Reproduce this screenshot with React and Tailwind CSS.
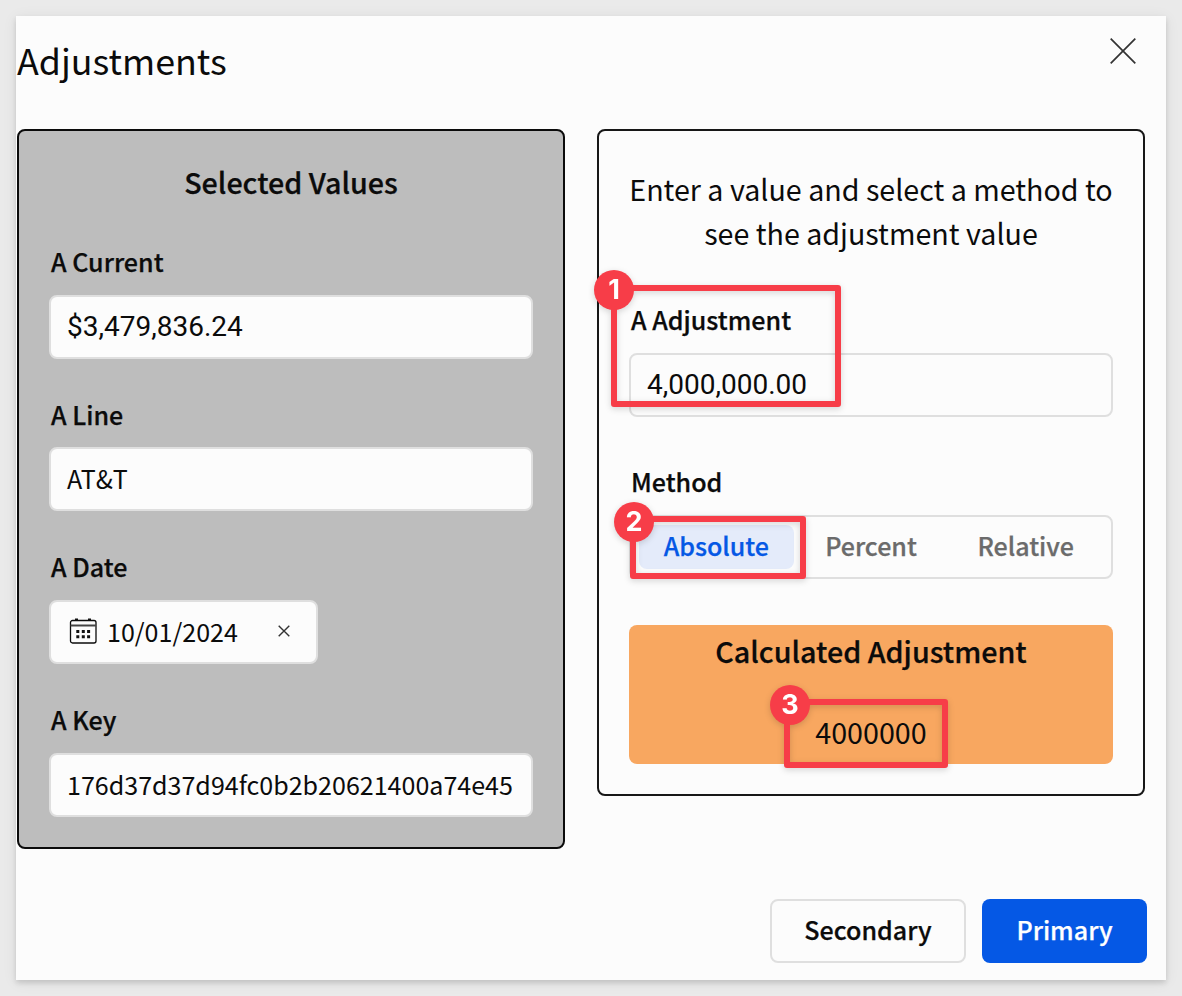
import React from "react";

const Label = ({ children, className = "" }) => (
  <div className={`h-[38px] pl-[2px] text-[25.05px] leading-[38px] font-medium [-webkit-text-stroke:0.25px_currentColor] ${className}`}>{children}</div>
);

const Field = ({ children, className = "" }) => (
  <div className={`flex h-16 items-center rounded-lg border-2 border-[#dfdfdf] bg-[#fcfcfc] px-4 leading-[38px] whitespace-nowrap ${className}`}>
    {children}
  </div>
);

const Cross = ({ size, stroke }) => (
  <svg width={size} height={size} viewBox={`0 0 ${size} ${size}`} fill="none" stroke="#333" strokeWidth={stroke}>
    <path d={`M.7 .7L${size - 0.7} ${size - 0.7}M${size - 0.7} .7L.7 ${size - 0.7}`} />
  </svg>
);

const Calendar = () => (
  <svg width="28" height="26" viewBox="0 0 28 26" fill="none">
    <rect x="1.5" y="2.5" width="25.5" height="22.5" rx="2" stroke="#0b0b0b" strokeWidth="1.3" />
    <path d="M1.5 7.5H27" stroke="#444" strokeWidth="2" />
    <path d="M6 1.3H9M19 1.3H22" stroke="#111" strokeWidth="1.8" />
    <path d="M7.3 13.5h3M12.8 13.5h3M18.1 13.5h3M7.3 18.7h3M12.8 18.7h3M18.1 18.7h3" stroke="#111" strokeWidth="3" />
  </svg>
);

const Callout = ({ n, className, badge }) => (
  <div className={`absolute rounded-[3px] border-6 border-[#f73d48] drop-shadow-[0_2px_3px_rgba(0,0,0,0.16)] ${className}`}>
    <div className={`absolute flex size-10 items-center justify-center rounded-full bg-[#f73d48] pb-px font-[Inter] text-[27px] leading-none font-bold text-white ${badge}`}>
      {n}
    </div>
  </div>
);

export default function App() {
  return (
    <div className="h-[996px] w-[1182px] overflow-hidden bg-[#eaeaea] p-4 font-['Noto_Sans_CJK_JP',sans-serif] text-[#0b0b0b]">
      <main className="flex h-[964px] w-[1150px] flex-col bg-[#fcfcfc] shadow-[0_3px_5px_rgba(0,0,0,0.13),0_2px_14px_rgba(0,0,0,0.07)]">
        <header className="flex h-[113px] justify-between pr-[30px] pl-px">
          <h1 className="pt-[15px] text-[35.8px] leading-[56px]">Adjustments</h1>
          <button className="mt-[22px] h-[26px]"><Cross size={26} stroke={1.7} /></button>
        </header>
        <div className="flex items-start gap-8 pl-px">
          <section className="h-[720px] w-[548px] rounded-lg border-2 border-[#0b0b0b] bg-[#bdbdbd] px-[30px]">
            <h2 className="mt-[29px] text-center text-[28.7px] leading-[44px] font-medium [-webkit-text-stroke:0.25px_currentColor]">Selected Values</h2>
            <Label className="mt-[38px]">A Current</Label>
            <Field className="mt-[15px] font-[Roboto] text-[28px]">$3,479,836.24</Field>
            <Label className="mt-[36px]">A Line</Label>
            <Field className="mt-[14px] pb-[2px] text-[25.05px]">AT&amp;T</Field>
            <Label className="mt-[36px]">A Date</Label>
            <Field className="mt-[15px] w-[269px] gap-[10px] pb-[2px] pl-[18px] text-[25.05px]">
              <Calendar />
              <span>10/01/2024</span>
              <span className="ml-auto pr-[10px]"><Cross size={12} stroke={1.4} /></span>
            </Field>
            <Label className="mt-[36px]">A Key</Label>
            <Field className="mt-[15px] pb-[2px] text-[25.05px]">176d37d37d94fc0b2b20621400a74e45</Field>
          </section>
          <section className="relative h-[667px] w-[548px] rounded-lg border-2 border-[#171717] px-[30px]">
            <p className="mt-[36px] text-center text-[28.65px] leading-[44px] whitespace-nowrap">Enter a value and select a method to<br />see the adjustment value</p>
            <Label className="mt-[45px]">A Adjustment</Label>
            <Field className="mt-[15px] font-[Roboto] text-[28px]">4,000,000.00</Field>
            <Label className="mt-[45px]">Method</Label>
            <div className="mt-[15px] flex h-16 items-center rounded-lg border-2 border-[#dfdfdf] px-2 text-[25.05px] leading-[41px] font-medium text-[#6b6b6b] [-webkit-text-stroke:0.25px_currentColor]">
              <span className="h-11 w-[155px] rounded-lg bg-[#e4ebfa] text-center text-[#0558e5]">Absolute</span>
              <span className="h-11 w-[155px] text-center">Percent</span>
              <span className="h-11 w-[155px] text-center">Relative</span>
            </div>
            <div className="mt-[46px] h-[139px] rounded-lg bg-[#f8a760] text-center text-[28.7px]">
              <h2 className="pt-[4px] leading-[44px] font-medium [-webkit-text-stroke:0.25px_currentColor]">Calculated Adjustment</h2>
              <p className="pt-[37px] leading-[44px]">4000000</p>
            </div>
            <Callout n="1" className="top-[154px] left-[12px] h-[122px] w-[230px]" badge="-top-[21px] -left-[23px]" />
            <Callout n="2" className="top-[385px] left-[31px] h-[63px] w-[175.5px]" badge="-top-[20px] -left-[22px]" />
            <Callout n="3" className="top-[568px] left-[185px] h-[69px] w-[164px]" badge="-top-[20px] -left-[20px]" />
          </section>
        </div>
        <footer className="mt-[50px] flex h-16 justify-end gap-4 pr-[19px] text-[25.05px] font-medium [-webkit-text-stroke:0.25px_currentColor]">
          <button className="h-16 w-[196px] rounded-lg border-2 border-[#dfdfdf] pb-[2px]">Secondary</button>
          <button className="h-16 w-[165px] rounded-lg bg-[#0558e5] pb-[2px] text-white">Primary</button>
        </footer>
      </main>
    </div>
  );
}
